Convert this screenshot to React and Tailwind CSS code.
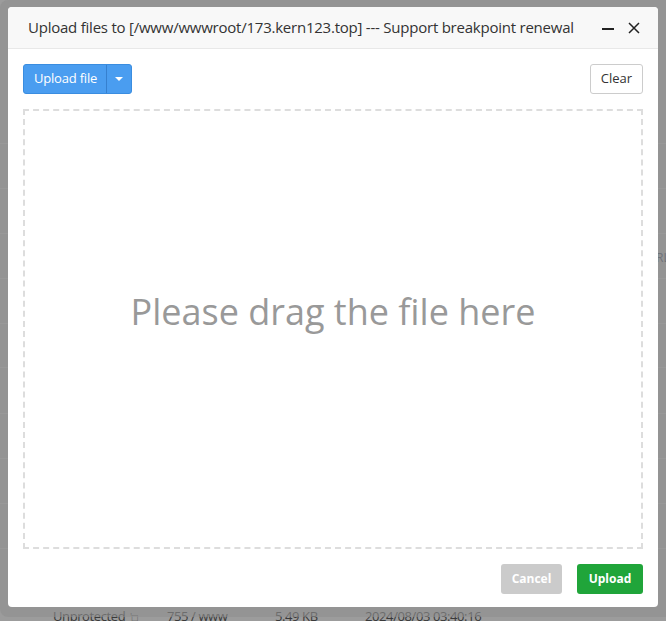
import React from "react";

export default function App() {
  const rows = [143, 188, 233, 278, 323, 367, 413, 458, 503, 548];
  return (
    <div className="relative w-[666px] h-[621px] overflow-hidden bg-[#9c9c9c]" style={{ fontFamily: '"Open Sans", "Noto Sans", sans-serif' }}>
      {rows.map((y) => (
        <div key={y} className="absolute left-0 right-0 h-px bg-[#a9a9a9]" style={{ top: y }} />
      ))}
      <div className="absolute left-[656px] top-[249px] text-[12px] text-[#3c4658]">RL</div>
      <div className="absolute left-0 top-[607px] w-[666px] h-[20px] text-[13px] text-[#3a3a3a] whitespace-nowrap tracking-[-0.4px]">
        <span className="absolute left-[53px]">Unprotected</span>
        <span className="absolute left-[130px] text-[10px] text-[#555] top-[3px]">'□</span>
        <span className="absolute left-[167px]">755 / www</span>
        <span className="absolute left-[275px]">5.49 KB</span>
        <span className="absolute left-[365px]">2024/08/03 03:40:16</span>
      </div>

      <div className="absolute left-0 top-0 w-[676px] h-[617px] rounded-[8px] bg-[#8f8f8f]/60 p-[8px] pt-[7px]">
        <div className="w-[650px] h-[600px] bg-white rounded-[4px] overflow-hidden flex flex-col">
          <div className="h-[42px] shrink-0 bg-[#f8f8f8] border-b border-[#e8e8e8] flex items-center pl-[20px] pr-[18px]">
            <div className="flex-1 text-[15px] text-[#333] whitespace-nowrap tracking-[-0.23px]">
              Upload files to [/www/wwwroot/173.kern123.top] --- Support breakpoint renewal
            </div>
            <div className="flex items-center gap-[14px]">
              <div className="w-[12px] h-[2px] bg-[#222] mt-[2px]" />
              <svg width="12" height="12" viewBox="0 0 12 12" className="mt-[1px]">
                <path d="M1 1 L11 11 M11 1 L1 11" stroke="#222" strokeWidth="1.5" />
              </svg>
            </div>
          </div>

          <div className="flex-1 flex flex-col px-[15px] pt-[15px]">
            <div className="flex justify-between items-center h-[30px]">
              <div className="flex h-[30px] rounded-[3px] bg-[#4a9df0] border border-[#3a8de0] text-white text-[13px]">
                <div className="pl-[10px] pr-[9px] flex items-center tracking-[-0.2px]">Upload file</div>
                <div className="w-[25px] border-l border-[#3680cf] flex items-center justify-center">
                  <svg width="8" height="4" viewBox="0 0 8 4"><path d="M0 0 L8 0 L4 4 Z" fill="white" /></svg>
                </div>
              </div>
              <div className="h-[30px] px-[10px] flex items-center border border-[#ccc] rounded-[3px] text-[13px] text-[#333] bg-white">
                Clear
              </div>
            </div>
            <div className="mt-[15px] h-[440px] border-2 border-dashed border-[#ddd] flex items-center justify-center">
              <div className="text-[36px] text-[#999] tracking-[0px] mb-[34px]">Please drag the file here</div>
            </div>
            <div className="flex justify-end gap-[15px] mt-[15px]">
              <div className="h-[30px] w-[61px] rounded-[3px] bg-[#cbcbcb] text-white text-[12px] font-bold flex items-center justify-center">Cancel</div>
              <div className="h-[30px] w-[66px] rounded-[3px] bg-[#20a53a] text-white text-[12px] font-bold flex items-center justify-center">Upload</div>
            </div>
          </div>
        </div>
      </div>
    </div>
  );
}
